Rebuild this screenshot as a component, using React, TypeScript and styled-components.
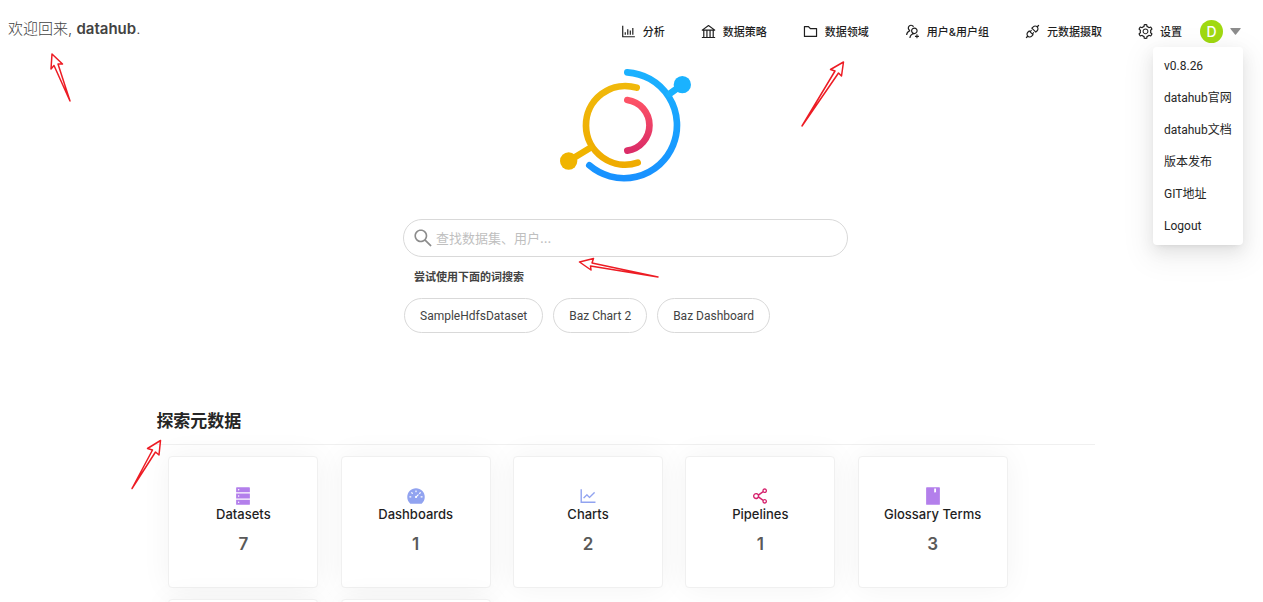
import React from 'react';
import styled, { createGlobalStyle } from 'styled-components';
import type { IconType } from 'react-icons';
import {
  AiFillBook,
  AiFillDashboard,
  AiFillDatabase,
  AiOutlineApi,
  AiOutlineBank,
  AiOutlineBarChart,
  AiOutlineFolder,
  AiOutlineLineChart,
  AiOutlineSearch,
  AiOutlineSetting,
  AiOutlineShareAlt,
  AiOutlineUsergroupAdd,
} from 'react-icons/ai';

const GlobalStyle = createGlobalStyle`
  * { box-sizing: border-box; }
  body {
    margin: 0;
    background: #fff;
    color: #262626;
    font-family: Inter, "Noto Sans CJK SC", sans-serif;
    font-size: 12px;
  }
  button, input { font-family: inherit; }
`;

const Page = styled.div`
  position: relative;
  height: 100vh;
  overflow: hidden;
  padding-right: 12px;
`;

const Header = styled.header`
  display: flex;
  align-items: center;
  justify-content: space-between;
  height: 63px;
  padding: 0 10px 0 8px;
`;

const Welcome = styled.div`
  padding-bottom: 6px;
  font-size: 15px;
  line-height: 22px;
  color: #434343;
  font-weight: 300;

  strong { font-weight: 600; }
`;

const Nav = styled.nav`
  display: flex;
  align-items: center;
  gap: 35px;
`;

const NavLink = styled.a`
  display: flex;
  align-items: center;
  gap: 6px;
  color: #1f1f1f;
  font-size: 11px;
  font-weight: 500;
  line-height: 18px;
  text-decoration: none;
  white-space: nowrap;

  svg { font-size: 17px; }
`;

const Account = styled.div`
  position: relative;
  margin-left: 18px;
`;

const AccountButton = styled.button`
  display: flex;
  align-items: center;
  gap: 7px;
  padding: 0;
  border: 0;
  background: none;
`;

const Avatar = styled.span`
  width: 23px;
  height: 23px;
  border-radius: 50%;
  background: #a0d911;
  color: #fff;
  font-size: 14px;
  font-weight: 500;
  line-height: 23px;
  text-align: center;
`;

const Menu = styled.ul`
  position: absolute;
  z-index: 2;
  top: 27px;
  right: -2px;
  width: 90px;
  margin: 0;
  padding: 3px 0;
  list-style: none;
  background: #fff;
  border-radius: 4px;
  box-shadow: 0 3px 6px -4px rgba(0, 0, 0, 0.12), 0 6px 16px rgba(0, 0, 0, 0.08),
    0 9px 28px 8px rgba(0, 0, 0, 0.05);
`;

const MenuLink = styled.a`
  display: block;
  padding: 0 11px;
  color: #262626;
  font-family: Roboto, "Noto Sans CJK SC", sans-serif;
  font-size: 12px;
  line-height: 32px;
  text-decoration: none;
  white-space: nowrap;
`;

const Right = styled.div`
  display: flex;
  align-items: center;
`;

const Hero = styled.section`
  display: flex;
  flex-direction: column;
  align-items: center;
  padding-top: 6px;
`;

const SearchArea = styled.div`
  width: 445px;
  max-width: 100%;
  margin-top: 37px;
`;

const SearchBox = styled.label`
  display: flex;
  align-items: center;
  gap: 2px;
  height: 38px;
  padding: 0 8px;
  border: 1px solid #d9d9d9;
  border-radius: 19px;
  color: #8c8c8c;

  svg { flex: none; font-size: 22px; }
`;

const SearchInput = styled.input`
  flex: 1;
  min-width: 0;
  padding: 0;
  border: 0;
  outline: 0;
  background: none;
  font-size: 13px;

  &::placeholder { color: #bfbfbf; }
`;

const Hint = styled.p`
  margin: 12px 11px;
  color: #434343;
  font-size: 11px;
  font-weight: 600;
  line-height: 17px;
`;

const Suggestions = styled.div`
  display: flex;
  gap: 10px;
  padding-left: 1px;
`;

const Suggestion = styled.button`
  height: 35px;
  padding: 0 15px;
  border: 1px solid #d9d9d9;
  border-radius: 18px;
  background: #fff;
  color: #434343;
  font-family: Roboto, "Noto Sans CJK SC", sans-serif;
  font-size: 12px;
  white-space: nowrap;
`;

const Explore = styled.section`
  width: 75%;
  margin: 74px auto 0;
`;

const Title = styled.h2`
  margin: 0;
  padding-bottom: 9px;
  border-bottom: 1px solid #f0f0f0;
  font-size: 17px;
  font-weight: 600;
  line-height: 28px;
`;

const Cards = styled.div`
  display: grid;
  grid-template-columns: repeat(5, 150px);
  justify-content: space-between;
  row-gap: 11px;
  padding: 11px 87px 0 12px;
`;

const Card = styled.a`
  display: flex;
  flex-direction: column;
  align-items: center;
  min-height: 132px;
  padding-top: 29px;
  border: 1px solid #f0f0f0;
  border-radius: 4px;
  background: #fff;
  box-shadow: 0 0 30px rgba(0, 0, 0, 0.05);
  color: #1f1f1f;
  text-decoration: none;
`;

const CardIcon = styled.span<{ $color: string }>`
  display: flex;
  color: ${(p) => p.$color};
  font-size: 20px;
`;

const CardName = styled.span`
  font-size: 13px;
  font-weight: 500;
  line-height: 17px;
`;

const CardCount = styled.span`
  margin-top: 9px;
  color: #595959;
  font-size: 17px;
  font-weight: 600;
  line-height: 24px;
`;

const Annotations = styled.svg`
  position: absolute;
  z-index: 3;
  top: 0;
  left: 0;
  pointer-events: none;
`;

const navItems: { label: string; icon: IconType }[] = [
  { label: '分析', icon: AiOutlineBarChart },
  { label: '数据策略', icon: AiOutlineBank },
  { label: '数据领域', icon: AiOutlineFolder },
  { label: '用户&用户组', icon: AiOutlineUsergroupAdd },
  { label: '元数据摄取', icon: AiOutlineApi },
  { label: '设置', icon: AiOutlineSetting },
];

const menuItems = ['v0.8.26', 'datahub官网', 'datahub文档', '版本发布', 'GIT地址', 'Logout'];

const suggestions = ['SampleHdfsDataset', 'Baz Chart 2', 'Baz Dashboard'];

const entities: { name: string; count: number; icon: IconType; color: string }[] = [
  { name: 'Datasets', count: 7, icon: AiFillDatabase, color: '#b37feb' },
  { name: 'Dashboards', count: 1, icon: AiFillDashboard, color: '#91a3f0' },
  { name: 'Charts', count: 2, icon: AiOutlineLineChart, color: '#91a3f0' },
  { name: 'Pipelines', count: 1, icon: AiOutlineShareAlt, color: '#d6246e' },
  { name: 'Glossary Terms', count: 3, icon: AiFillBook, color: '#b37feb' },
];

const Logo = () => (
  <svg width="131" height="113" viewBox="60 42 393 339" fill="none" role="img" aria-label="DataHub">
    <defs>
      <linearGradient id="blue" x1="0" y1="50" x2="0" y2="380" gradientUnits="userSpaceOnUse">
        <stop offset="0" stopColor="#1ab2ff" />
        <stop offset="1" stopColor="#1890ff" />
      </linearGradient>
      <linearGradient id="red" x1="0" y1="125" x2="0" y2="297" gradientUnits="userSpaceOnUse">
        <stop offset="0" stopColor="#ff5566" />
        <stop offset="1" stopColor="#d92b68" />
      </linearGradient>
      <linearGradient id="gold" x1="0" y1="82" x2="0" y2="340" gradientUnits="userSpaceOnUse">
        <stop offset="0" stopColor="#f0b90b" />
        <stop offset="1" stopColor="#efab00" />
      </linearGradient>
    </defs>
    <g strokeWidth="20" strokeLinecap="round">
      <path d="M262 52A159 159 0 1 1 148 331" stroke="url(#blue)" />
      <path d="M388 117L427 89" stroke="#1ab2ff" />
      <path d="M290 98A118 118 0 1 0 293 323" stroke="url(#gold)" />
      <path d="M86 318L150 279" stroke="#f0b400" />
      <path d="M262 135A76.700 76.700 0 0 1 262 287" stroke="url(#red)" />
    </g>
    <circle cx="427" cy="89" r="26" fill="#1ab2ff" />
    <circle cx="86" cy="318" r="26" fill="#f0b400" />
  </svg>
);

export default function App() {
  return (
    <Page>
      <GlobalStyle />
      <Header>
        <Welcome>
          欢迎回来, <strong>datahub</strong>.
        </Welcome>
        <Right>
          <Nav>
            {navItems.map(({ label, icon: Icon }) => (
              <NavLink href="#" key={label}>
                <Icon />
                {label}
              </NavLink>
            ))}
          </Nav>
          <Account>
            <AccountButton aria-label="Account menu">
              <Avatar>D</Avatar>
              <svg width="11" height="7" viewBox="0 0 11 7" fill="#8c8c8c">
                <path d="M0.8 0H10.2Q11 0 10.6 0.8L6 6.5Q5.5 7 5 6.5L0.4 0.8Q0 0 0.8 0Z" />
              </svg>
            </AccountButton>
            <Menu>
              {menuItems.map((item) => (
                <li key={item}>
                  <MenuLink href="#">{item}</MenuLink>
                </li>
              ))}
            </Menu>
          </Account>
        </Right>
      </Header>

      <Hero>
        <Logo />
        <SearchArea>
          <SearchBox>
            <AiOutlineSearch />
            <SearchInput type="text" aria-label="搜索" placeholder="查找数据集、用户..." />
          </SearchBox>
          <Hint>尝试使用下面的词搜索</Hint>
          <Suggestions>
            {suggestions.map((s) => (
              <Suggestion key={s}>{s}</Suggestion>
            ))}
          </Suggestions>
        </SearchArea>
      </Hero>

      <Explore>
        <Title>探索元数据</Title>
        <Cards>
          {entities.map(({ name, count, icon: Icon, color }) => (
            <Card href="#" key={name}>
              <CardIcon $color={color}>
                <Icon />
              </CardIcon>
              <CardName>{name}</CardName>
              <CardCount>{count}</CardCount>
            </Card>
          ))}
          <Card as="div" />
          <Card as="div" />
        </Cards>
      </Explore>

      <Annotations width="700" height="500" viewBox="0 0 700 500" overflow="visible" fill="none" stroke="#ed1c24" strokeWidth="1.5" strokeLinejoin="round" aria-hidden="true">
        <path d="M70 101L54 65.500L51 69L52 54L62.500 64L58 64Z" />
        <path d="M802 126L835 71L830.500 69.500L843.500 62L841.500 76L838.500 73Z" />
        <path d="M658 277L592 263L593.500 258.500L579.500 262L591 270L590.500 266Z" />
        <path d="M132 488.500L152.500 450L147.500 448.500L160.500 440.500L159 455L155.500 452Z" />
      </Annotations>
    </Page>
  );
}
